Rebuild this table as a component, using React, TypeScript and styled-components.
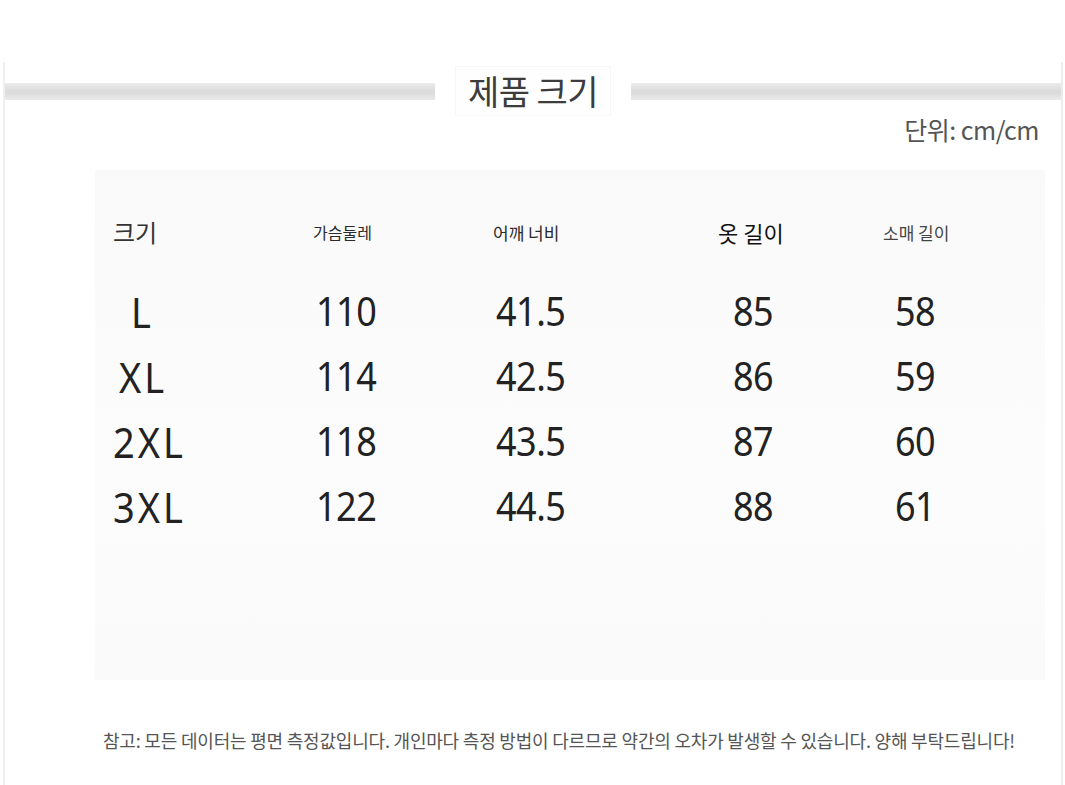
import React from "react";
import styled, { createGlobalStyle } from "styled-components";

const GlobalStyle = createGlobalStyle`
  html, body {
    margin: 0;
    padding: 0;
    background: #ffffff;
  }
  body {
    font-family: "Noto Sans", "Noto Sans CJK KR", sans-serif;
  }
`;

const KR = `"Noto Sans CJK KR", "Noto Sans", sans-serif`;
const NUM = `"Noto Sans", "Open Sans", sans-serif`;

const Page = styled.div`
  width: 1065px;
  height: 785px;
  background: #ffffff;
  padding-top: 62px;
  box-sizing: border-box;
  overflow: hidden;
`;

const Frame = styled.div`
  margin-left: 3px;
  width: 1060px;
  height: 723px;
  box-sizing: border-box;
  border-left: 2px solid #efefef;
  border-right: 2px solid #ececec;
  display: flex;
  flex-direction: column;
`;

const Header = styled.div`
  height: 58px;
  display: flex;
  align-items: center;
`;

const Bar = styled.div`
  flex: 1;
  height: 17px;
  background: linear-gradient(#ececec, #dcdcdc 45%, #dcdcdc 60%, #eaeaea);
`;

const TitleBox = styled.div`
  width: 196px;
  display: flex;
  justify-content: center;
`;

const Title = styled.h1`
  margin: 0;
  padding: 2px 12px;
  font-family: ${KR};
  font-weight: 400;
  font-size: 34px;
  letter-spacing: -0.5px;
  line-height: 44px;
  color: #3c3c3c;
  background: #fefefe;
  box-shadow: 0 0 0 1px #f7f7f7;
`;

const Unit = styled.div`
  align-self: flex-end;
  margin: -3px 20px 0 0;
  padding: 0 2px 0 22px;
  font-family: ${KR};
  font-size: 25px;
  line-height: 24px;
  color: #555555;
  letter-spacing: -0.5px;
`;

const Panel = styled.div`
  margin: 29px 0 0 90px;
  width: 950px;
  height: 510px;
  box-sizing: border-box;
  padding: 42px 0 0 18px;
  background: linear-gradient(#f9f9f9, #fcfcfc 60%, #fafafa);
`;

const Row = styled.div<{ $h: number }>`
  display: grid;
  grid-template-columns: 200px 180px 225px 165px 1fr;
  height: ${({ $h }) => $h}px;
  align-items: center;
`;

const HeadCell = styled.div<{ $size: number; $color: string }>`
  font-family: ${KR};
  font-size: ${({ $size }) => $size}px;
  color: ${({ $color }) => $color};
  line-height: 1;
  white-space: nowrap;
`;

const Cell = styled.div<{ $dx: number; $label?: boolean }>`
  font-family: ${NUM};
  font-size: ${({ $label }) => ($label ? 38 : 36)}px;
  color: #222222;
  padding-left: ${({ $dx }) => $dx}px;
  line-height: 1;
  letter-spacing: ${({ $label }) => ($label ? "3px" : "-0.5px")};
  transform: scaleY(1.12);
  transform-origin: left center;
`;

const Spacer = styled.div`
  height: 26px;
`;

const Note = styled.p`
  margin: 48px 0 0 98px;
  font-family: ${KR};
  font-size: 18px;
  line-height: 24px;
  color: #555555;
  letter-spacing: -0.2px;
  white-space: nowrap;
`;

const sizes = [
  { name: "L", dx: 18, vals: ["110", "41.5", "85", "58"] },
  { name: "XL", dx: 6, vals: ["114", "42.5", "86", "59"] },
  { name: "2XL", dx: 0, vals: ["118", "43.5", "87", "60"] },
  { name: "3XL", dx: 0, vals: ["122", "44.5", "88", "61"] },
];

const colOffsets = [3, 3, 15, 12];

export default function App() {
  return (
    <Page>
      <GlobalStyle />
      <Frame>
        <Header>
          <Bar />
          <TitleBox>
            <Title>제품 크기</Title>
          </TitleBox>
          <Bar />
        </Header>
        <Unit>단위: cm/cm</Unit>
        <Panel>
          <Row $h={40}>
            <HeadCell $size={24} $color="#333">크기</HeadCell>
            <HeadCell $size={16} $color="#2a2a2a">가슴둘레</HeadCell>
            <HeadCell $size={17} $color="#2a2a2a">어깨 너비</HeadCell>
            <HeadCell $size={22} $color="#111">옷 길이</HeadCell>
            <HeadCell $size={17} $color="#444">소매 길이</HeadCell>
          </Row>
          <Spacer />
          {sizes.map((s) => (
            <Row $h={65} key={s.name}>
              <Cell $dx={s.dx} $label>
                {s.name}
              </Cell>
              {s.vals.map((v, i) => (
                <Cell $dx={colOffsets[i]} key={i}>
                  {v}
                </Cell>
              ))}
            </Row>
          ))}
        </Panel>
        <Note>
          참고: 모든 데이터는 평면 측정값입니다. 개인마다 측정 방법이 다르므로 약간의 오차가 발생할 수 있습니다. 양해 부탁드립니다!
        </Note>
      </Frame>
    </Page>
  );
}
